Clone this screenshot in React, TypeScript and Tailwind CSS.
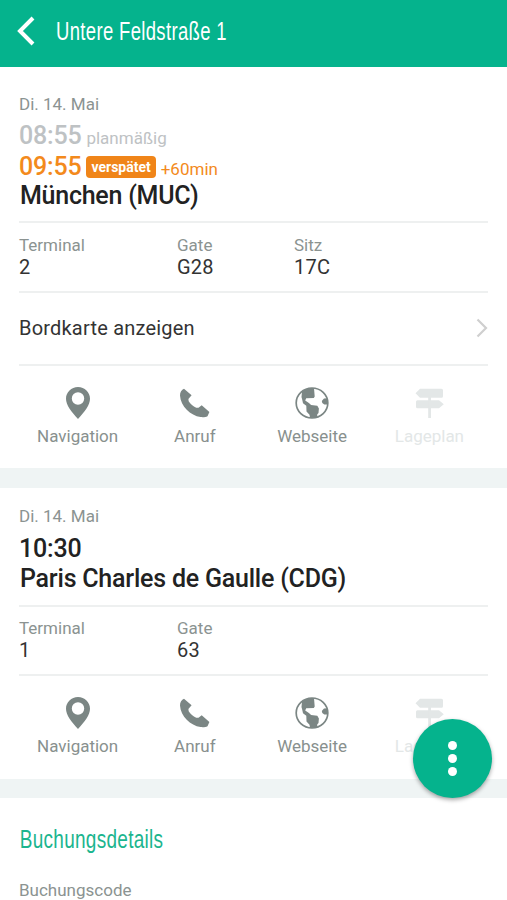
import { FC, ReactNode } from 'react'

// ---------------------------------------------------------------------------
// Types
// ---------------------------------------------------------------------------

interface Fact {
  label: string
  value: string
}

// ---------------------------------------------------------------------------
// Icons
// ---------------------------------------------------------------------------

const PinIcon: FC = () => (
  <svg width="24" height="32" viewBox="0 0 24 32" fill="currentColor">
    <path fillRule="evenodd" d="M12 0C5.300 0 0 5.200 0 11.700 0 18 5.200 24.500 12 32c6.800-7.500 12-14 12-20.300C24 5.200 18.700 0 12 0Zm0 17.700a6.200 6.200 0 1 0 0-12.400 6.200 6.200 0 0 0 0 12.400Z" />
  </svg>
)

const PhoneIcon: FC = () => (
  <svg width="31" height="30" viewBox="0 0 31 30" fill="currentColor">
    <path d="M5 .8 12.600 7.200 9.400 11l.3 2.300c1.800 2.600 4.400 5 7.500 6.500l2.300-.1 3.200-2.500 7.700 6.700-1.900 4.300c-1.700.9-4.200 1.300-7 .9C11.600 27.500 1.600 18.500 1 7.500.9 4.500 2.600 1.800 5 .8Z" />
  </svg>
)

const GlobeIcon: FC = () => (
  <svg width="34" height="32" viewBox="0 0 34 32">
    <ellipse cx="17" cy="16" rx="15.800" ry="15" fill="none" stroke="currentColor" strokeWidth="1.700" />
    <path fill="currentColor" d="M7 4.500C10 1.800 14 .5 19 1l.7 8.400-.9 1.600-7.600.3-1 2.300 3.700 2.400 2.200 2.100 6.200.7 1.600 2.700-.4 4.600-1.200 1.200-.1 3.400-7.200.2-.5-3.200-3-3.300-.2-5.600L8 16.200 7.300 13l-.8-3ZM32.500 11.300l-3.500.3-2.200 2.500.5 1.900 2 1.400 3.200.2Z" />
  </svg>
)

const SignpostIcon: FC = () => (
  <svg width="29" height="30" viewBox="0 0 29 30" fill="currentColor">
    <path d="M5 .8h21.500a1.500 1.500 0 0 1 1.500 1.500v5.900a1.500 1.500 0 0 1-1.500 1.500H5L.5 5.200ZM2.500 12.300H24l4.800 4-4.800 4H2.500A1.500 1.500 0 0 1 1 18.800v-5a1.500 1.500 0 0 1 1.500-1.500Z" />
    <path d="M13.200 9h2.800v21h-2.800Z" />
  </svg>
)

// ---------------------------------------------------------------------------
// Building blocks
// ---------------------------------------------------------------------------

const Facts: FC<{ items: Fact[]; className: string }> = ({ items, className }) => (
  <div className={`grid grid-cols-[158px_117px_1fr] border-t-2 border-[#eef0f0] ${className}`}>
    {items.map(item => (
      <div key={item.label}>
        <div className="text-[17px] leading-[22px] text-[#8b9391]">{item.label}</div>
        <div className="text-[20px] leading-[22px] tracking-[0.200px] text-[#333333]">{item.value}</div>
      </div>
    ))}
  </div>
)

const Action: FC<{ label: string; disabled?: boolean; children: ReactNode }> = ({ label, disabled, children }) => (
  <button
    disabled={disabled}
    className={`flex flex-col items-center ${disabled ? 'text-[#e3e7e7]' : 'text-[#7b8684]'}`}
  >
    <span className="flex h-8 items-center">{children}</span>
    <span className={`mt-[7px] text-[17px] leading-[20px] ${disabled ? '' : 'text-[#88908e]'}`}>{label}</span>
  </button>
)

const Actions: FC = () => (
  <div className="grid grid-cols-4 border-t-2 border-[#eef0f0] pt-[21px]">
    <Action label="Navigation"><PinIcon /></Action>
    <Action label="Anruf"><PhoneIcon /></Action>
    <Action label="Webseite"><GlobeIcon /></Action>
    <Action label="Lageplan" disabled><SignpostIcon /></Action>
  </div>
)

// ---------------------------------------------------------------------------
// Page
// ---------------------------------------------------------------------------

export default function App() {
  return (
    <div className="h-[900px] w-[507px] overflow-hidden bg-white font-['Roboto',sans-serif]">
      <header className="flex h-[67px] items-center bg-[#05b38d] pb-[5px] pl-[17px] text-white">
        <svg width="18" height="30" viewBox="0 0 18 30" fill="none" stroke="currentColor" strokeWidth="4">
          <path d="M16 2 3 15l13 13" />
        </svg>
        <h1 className="ml-[21px] origin-left scale-x-[0.71] whitespace-nowrap font-['Liberation_Sans',sans-serif] text-[26px] tracking-[0.500px]">
          Untere Feldstraße 1
        </h1>
      </header>

      <section className="h-[401px] px-[19px] pt-[27px]">
        <div className="text-[17px] leading-[20px] text-[#8b9391]">Di. 14. Mai</div>
        <div className="mt-[7px] flex h-[30px] items-baseline text-[#bec2c4]">
          <span className="text-[25px] font-medium leading-[30px] tracking-[-0.200px]">08:55</span>
          <span className="ml-[5px] text-[17px]">planmäßig</span>
        </div>
        <div className="flex h-[30px] items-baseline text-[#f38a1c]">
          <span className="text-[25px] font-medium leading-[31px] tracking-[-0.200px]">09:55</span>
          <span className="relative -top-[3px] ml-[5px] h-[22px] rounded-[4px] bg-[#f08519] px-[5px] text-[14px] font-bold leading-[22px] text-white">
            verspätet
          </span>
          <span className="ml-[5px] text-[17px]">+60min</span>
        </div>
        <div className="pl-px text-[25px] font-medium leading-[29px] tracking-[-0.250px] text-[#222222]">München (MUC)</div>
        <Facts
          className="mt-[11px] h-[70px] pt-[11px]"
          items={[
            { label: 'Terminal', value: '2' },
            { label: 'Gate', value: 'G28' },
            { label: 'Sitz', value: '17C' },
          ]}
        />
        <button className="flex h-[73px] w-full items-center justify-between border-t-2 border-[#eef0f0] pb-px text-[20px] tracking-[0.200px] text-[#333333]">
          <span>Bordkarte anzeigen</span>
          <svg width="12" height="20" viewBox="0 0 12 20" fill="none" stroke="#cfcfcf" strokeWidth="2.200">
            <path d="m1.500 1.500 8.500 8.500-8.500 8.500" />
          </svg>
        </button>
        <Actions />
      </section>

      <div className="h-[20px] bg-[#eff4f4]" />

      <section className="h-[291px] px-[19px] pt-[18px]">
        <div className="text-[17px] leading-[20px] text-[#8b9391]">Di. 14. Mai</div>
        <div className="mt-[8px] text-[25px] font-medium leading-[30px] tracking-[-0.200px] text-[#222222]">10:30</div>
        <div className="pl-px text-[25px] font-medium leading-[30px] tracking-[-0.220px] text-[#222222]">Paris Charles de Gaulle (CDG)</div>
        <Facts
          className="mt-[11px] h-[69px] pt-[10px]"
          items={[
            { label: 'Terminal', value: '1' },
            { label: 'Gate', value: '63' },
          ]}
        />
        <Actions />
      </section>

      <div className="h-[19px] bg-[#eff4f4]" />

      <section className="px-[19px] pt-[25px]">
        <h2 className="w-max origin-left scale-x-[0.73] pl-px font-['Liberation_Sans',sans-serif] text-[26px] leading-[32px] tracking-[0.400px] text-[#1bb58e]">
          Buchungsdetails
        </h2>
        <div className="mt-[25px] text-[17px] leading-[20px] text-[#8b9391]">Buchungscode</div>
      </section>

      <button className="absolute left-[413px] top-[719px] flex size-[79px] flex-col items-center justify-center gap-[4px] rounded-full bg-[#05b38d] shadow-[0_2px_4px_rgba(0,0,0,0.35)]">
        <span className="size-[9px] rounded-full bg-white" />
        <span className="size-[9px] rounded-full bg-white" />
        <span className="size-[9px] rounded-full bg-white" />
      </button>
    </div>
  )
}
